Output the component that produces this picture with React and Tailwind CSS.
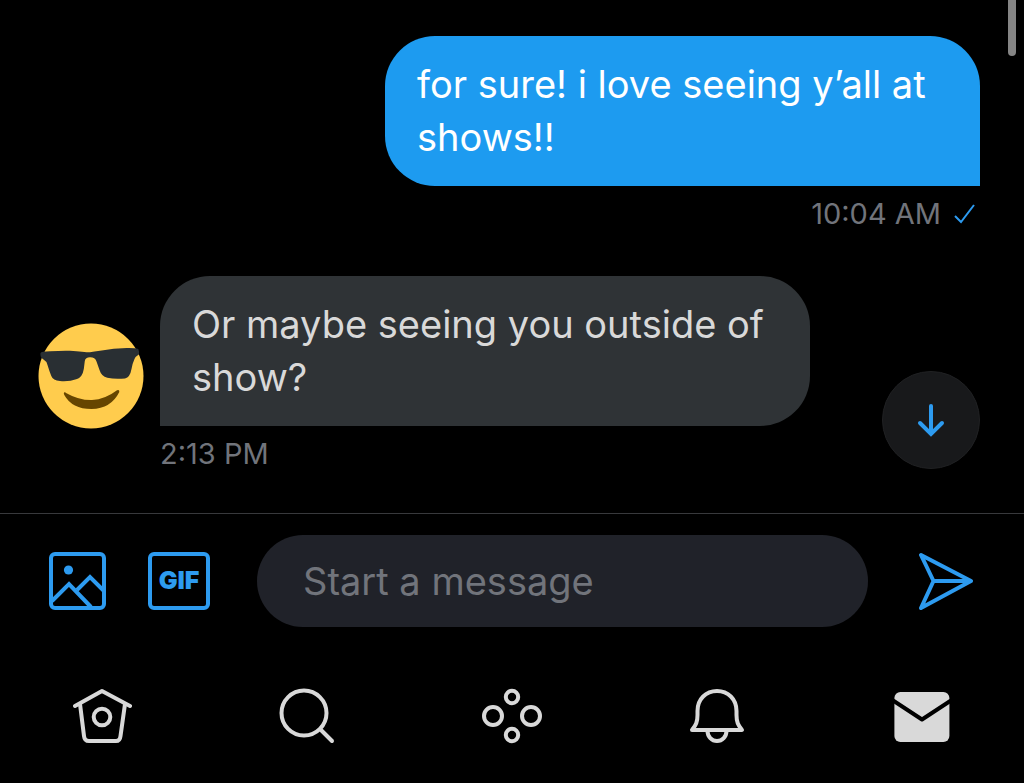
import React, { useState } from 'react';

const navIcon = {
  width: 60,
  height: 60,
  viewBox: '0 0 60 60',
  fill: 'none',
  stroke: 'currentColor',
  strokeWidth: 4,
  strokeLinecap: 'round',
  strokeLinejoin: 'round',
  'aria-hidden': true,
};

const HomeIcon = () => (
  <svg {...navIcon}>
    <path d="M3 20 L30 5 L58 20" />
    <path d="M8 18 L12 50 Q12.500 55 17 55 H44 Q48 55 48.500 50 L53 18" />
    <circle cx="30" cy="31" r="8.3" />
  </svg>
);

const SearchIcon = () => (
  <svg {...navIcon}>
    <circle cx="27" cy="27" r="22.500" />
    <path d="M44 44 L55 55" />
  </svg>
);

const SpacesIcon = () => (
  <svg {...navIcon}>
    <circle cx="30" cy="11" r="6.2" />
    <circle cx="11" cy="30" r="9" />
    <circle cx="49" cy="30" r="9" />
    <circle cx="30" cy="49" r="6.2" />
  </svg>
);

const BellIcon = () => (
  <svg {...navIcon}>
    <path d="M5 44 C9 39 10.500 36 10.500 29 V25 C10.500 13 19 5 30 5 C41 5 49.500 13 49.500 25 V29 C49.500 36 51 39 55 44 Z" />
    <path d="M20.500 45 A9.500 10 0 0 0 39.500 45" />
  </svg>
);

const MailIcon = () => (
  <svg {...navIcon}>
    <rect x="2.400" y="6" width="55" height="50" rx="6" fill="currentColor" stroke="none" />
    <path d="M1 14.500 L30 33.500 L59 14.500" stroke="#000000" strokeLinecap="butt" />
  </svg>
);

const SunglassesAvatar = () => (
  <svg className="size-[106px]" viewBox="0 0 106 106" role="img" aria-label="Smiling face with sunglasses">
    <circle cx="53" cy="53" r="52.500" fill="#ffcc4d" />
    <path
      fill="#292f33"
      d="M2.500 30 Q3 28.600 12 28.300 Q24 27.400 32 27.700 Q46 29 52 29.300 Q56 28.600 62 27.700 Q76 25.400 88.700 25 Q97 24.800 100.300 26 Q101.600 29 100.800 31.500 Q97.500 33.500 96.500 36 Q94.600 40 93.500 46 Q92 54.500 87 55.400 Q77 56.300 69.300 54.800 Q63.500 53.500 61.500 47 L58.500 38.500 Q57 34.200 52 34.300 Q47.400 34.400 46.800 38 L45.800 46 Q44.500 54 39 56 Q31 58.800 22 58 Q15 57.600 13.300 53 Q11.300 48 9.500 42 Q8.500 38 5.500 36.500 Q1.800 34.500 2.500 30 Z"
    />
    <path fill="#664500" d="M26 69.500 Q27 69 28.500 70.200 Q41 77.300 54 77 Q67 76.500 79 67.300 Q81.500 66 81.300 69 Q73 85.700 53.500 86 Q34 86 26.300 72 Q25.500 70.300 26 69.500 Z" />
  </svg>
);

const tabs = [
  { label: 'Home', Icon: HomeIcon },
  { label: 'Search', Icon: SearchIcon },
  { label: 'Spaces', Icon: SpacesIcon },
  { label: 'Notifications', Icon: BellIcon },
  { label: 'Messages', Icon: MailIcon },
];

const Composer = () => {
  const [message, setMessage] = useState('');

  return (
    <form
      onSubmit={(e) => {
        e.preventDefault();
        setMessage('');
      }}
      className="flex items-center border-t border-[#38393c] pt-[21px] pl-12 pr-[50px]"
    >
      <button type="button" aria-label="Add photo" className="shrink-0 text-[#2d9bf0]">
        <svg width="58" height="58" viewBox="0 0 58 58" fill="none" stroke="currentColor" strokeWidth="4">
          <rect x="3" y="2" width="53" height="54" rx="4" />
          <circle cx="20.500" cy="18" r="4.600" fill="currentColor" stroke="none" />
          <path d="M4 49 L21 32 L43 55" />
          <path d="M29 38 L42 25 L56 39" />
        </svg>
      </button>
      <button
        type="button"
        aria-label="Add GIF"
        className="ml-[42px] flex h-[58px] w-[62px] shrink-0 items-center justify-center rounded-md border-4 border-[#2d9bf0] text-[25px] font-black text-[#2d9bf0]"
      >
        GIF
      </button>
      <input
        type="text"
        aria-label="Start a message"
        placeholder="Start a message"
        value={message}
        onChange={(e) => setMessage(e.target.value)}
        className="ml-[47px] h-[92px] min-w-0 flex-1 rounded-full bg-[#202229] px-[46px] text-[38px] text-[#d9d9d9] placeholder:text-[#71747b] focus:outline-none"
      />
      <button type="submit" aria-label="Send" className="ml-[50px] shrink-0 text-[#2d9bf0]">
        <svg width="56" height="58" viewBox="0 0 56 58" fill="none" stroke="currentColor" strokeWidth="4" strokeLinejoin="round">
          <path d="M3 3 L53 29 L3 56 L15.500 29 Z" />
          <path d="M15.500 29 H53" />
        </svg>
      </button>
    </form>
  );
};

const App = () => {
  return (
    <div className="relative flex min-h-screen flex-col bg-black font-['Inter','Liberation_Sans',sans-serif]">
      <div className="absolute top-0 right-2 h-14 w-2 rounded-b-full bg-[#858585]" />

      <main className="relative pt-9 pr-11 pb-[39px] pl-[38px]">
        <div className="flex flex-col items-end">
          <p className="max-w-[595px] rounded-[50px] rounded-br-none bg-[#1d9bf0] px-8 py-[22px] text-[38px] leading-[53px] text-white">
            for sure! i love seeing y’all at shows!!
          </p>
          <div className="mt-2 flex items-center gap-3 pr-1 text-[29px] leading-10 text-[#71747b]">
            <span>10:04 AM</span>
            <svg width="23" height="22" viewBox="0 0 23 22" fill="none" stroke="#2d9bf0" strokeWidth="2" aria-hidden="true">
              <path d="M2 13 L8 19 L21 2" />
            </svg>
          </div>
        </div>

        <div className="mt-[42px] flex items-end gap-4">
          <div className="shrink-0 pb-[45px]">
            <SunglassesAvatar />
          </div>
          <div className="max-w-[650px]">
            <p className="rounded-[50px] rounded-bl-none bg-[#2f3336] px-8 py-[22px] text-[38px] leading-[53px] text-[#d9d9d9]">
              Or maybe seeing you outside of show?
            </p>
            <div className="mt-2 text-[29px] leading-10 text-[#71747b]">2:13 PM</div>
          </div>
        </div>

        <button
          type="button"
          aria-label="Scroll to latest"
          className="absolute right-11 bottom-11 flex size-[98px] items-center justify-center rounded-full border border-[#202123] bg-[#18191b] text-[#2d9bf0]"
        >
          <svg width="28" height="34" viewBox="0 0 28 34" fill="none" stroke="currentColor" strokeWidth="4" strokeLinecap="round">
            <path d="M14 3 V30" />
            <path d="M3 20 L14 31 L25 20" />
          </svg>
        </button>
      </main>

      <Composer />

      <nav className="mt-[59px] grid grid-cols-5 pb-9 text-[#d9d9d9]">
        {tabs.map(({ label, Icon }) => (
          <a key={label} href={`#${label.toLowerCase()}`} aria-label={label} className="flex justify-center">
            <Icon />
          </a>
        ))}
      </nav>
    </div>
  );
};

export default App;
